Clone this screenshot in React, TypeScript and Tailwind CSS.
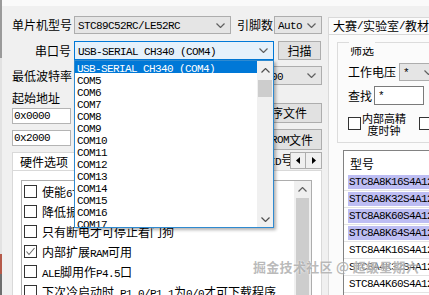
import React from 'react'

const mono = "font-['Liberation_Mono',monospace] text-[11px] tracking-[-0.6px]"

function M({ children }: { children: React.ReactNode }) {
  return <span className={mono}>{children}</span>
}

function Chevron({ up = false, color = '#606060' }: { up?: boolean; color?: string }) {
  return (
    <svg width="9" height="5" viewBox="0 0 9 5" className="shrink-0">
      <polyline
        points={up ? '0.5,4.5 4.5,0.5 8.5,4.5' : '0.5,0.5 4.5,4.5 8.5,0.5'}
        fill="none"
        stroke={color}
        strokeWidth="1.2"
      />
    </svg>
  )
}

function Combo({ cls, focused, children }: { cls: string; focused?: boolean; children?: React.ReactNode }) {
  return (
    <div
      className={`${cls} h-full shrink-0 flex items-center border pl-[3px] pr-[5px] ${
        focused ? 'border-[#0078d7] bg-[#e5f1fb]' : 'border-[#adadad] bg-[#e5e5e5]'
      }`}
    >
      <div className="flex-1 min-w-0 overflow-hidden whitespace-nowrap leading-[14px]">{children}</div>
      <Chevron />
    </div>
  )
}

function Btn({ cls, children }: { cls: string; children: React.ReactNode }) {
  return (
    <div
      className={`${cls} shrink-0 flex items-center justify-center border border-[#adadad] bg-[#e1e1e1] whitespace-nowrap overflow-hidden`}
    >
      {children}
    </div>
  )
}

function Field({ cls, children }: { cls: string; children: React.ReactNode }) {
  return (
    <div className={`${cls} h-[16px] w-[59px] flex items-center border border-[#b4b4b4] bg-white pl-[1px] overflow-hidden whitespace-nowrap`}>
      {children}
    </div>
  )
}

function Box({ checked }: { checked?: boolean }) {
  return (
    <div className="w-[13px] h-[13px] shrink-0 border border-[#333333] bg-white">
      {checked && (
        <svg width="11" height="11" viewBox="0 0 11 11">
          <polyline points="1.5,5.5 4,8.5 9.5,2" fill="none" stroke="#6a6a6a" strokeWidth="1.1" />
        </svg>
      )}
    </div>
  )
}

function Tri({ left }: { left?: boolean }) {
  return (
    <svg width="4" height="7" viewBox="0 0 4 7">
      <polygon points={left ? '4,0 0,3.5 4,7' : '0,0 4,3.5 0,7'} fill="#000" />
    </svg>
  )
}

// ──── 数据 ─────────────────────────────────────────
const ports = ['COM5', 'COM6', 'COM7', 'COM8', 'COM9', 'COM10', 'COM11', 'COM12', 'COM13', 'COM14', 'COM15', 'COM16', 'COM17']

const options: { checked?: boolean; text: React.ReactNode }[] = [
  { text: <>使能<M>6T(</M>双倍速<M>)</M></> },
  { text: <>降低振荡器放大增益</> },
  { text: <>只有断电才可停止看门狗</> },
  { checked: true, text: <>内部扩展<M>RAM</M>可用</> },
  { text: <><M>ALE</M>脚用作<M>P4.5</M>口</> },
  { text: <>下次冷启动时<M>,P1.0/P1.1</M>为<M>0/0</M>才可下载程序</> },
  { text: <>上电复位使用较长延时</> },
]

const models = [
  { name: 'STC8A8K16S4A12', hi: true },
  { name: 'STC8A8K32S4A12', hi: true },
  { name: 'STC8A8K60S4A12', hi: true },
  { name: 'STC8A8K64S4A12', hi: true },
  { name: 'STC8A4K16S4A12' },
  { name: 'STC8A4K32S4A12' },
  { name: 'STC8A4K60S4A12' },
  { name: 'STC8A4K64S4A12' },
]

export default function App() {
  return (
    <div className="relative w-[429px] h-[295px] overflow-hidden bg-[#f0f0f0] flex font-['Noto_Sans_CJK_SC',sans-serif] text-[12px] leading-[14px] text-black">
      {/* 背后窗口的边 */}
      <div className="w-[2px] shrink-0 flex flex-col">
        <div className="h-[58px] bg-[#9a9a9a]" />
        <div className="h-[196px] bg-[#e2e2e2]" />
        <div className="h-[20px] bg-[#b55a4a]" />
        <div className="flex-1 bg-[#6e6e6e]" />
      </div>

      <div className="w-[427px] shrink-0 flex flex-col overflow-hidden">
        <div className="h-[6px] bg-[#fafafa] shrink-0" />

        <div className="flex flex-1">
          {/* ──── 左侧 ──── */}
          <div className="w-[326px] shrink-0 pl-[10px] pr-[6px] pt-[10px] flex flex-col">
            <div className="flex items-center h-[18px]">
              <div className="w-[62px] shrink-0">单片机型号</div>
              <Combo cls="w-[157px]"><M>STC89C52RC/LE52RC</M></Combo>
              <div className="ml-[6px] w-[36px] shrink-0">引脚数</div>
              <Combo cls="ml-[1px] w-[48px]"><M>Auto</M></Combo>
            </div>

            <div className="flex items-center h-[19px] mt-[7px]">
              <div className="w-[62px] shrink-0 text-right pr-[3px]">串口号</div>
              <Combo cls="w-[200px]" focused><M>USB-SERIAL CH340 (COM4)</M></Combo>
              <Btn cls="ml-[4px] w-[43px] h-full">扫描</Btn>
            </div>

            <div className="flex items-center h-[19px] mt-[6px]">
              <div className="w-[62px] shrink-0">最低波特率</div>
              <Combo cls="w-[88px]"><M>2400</M></Combo>
              <div className="ml-[8px] w-[60px] shrink-0">最高波特率</div>
              <Combo cls="ml-[13px] w-[79px]"><M>115200</M></Combo>
            </div>

            <div className="flex">
              <div className="flex flex-col">
                <div className="mt-[6px] h-[14px]">起始地址</div>
                <Field cls="mt-[3px]"><M>0x0000</M></Field>
                <Field cls="mt-[6px]"><M>0x2000</M></Field>
              </div>
              <div className="ml-auto w-[102px] flex flex-col">
                <Btn cls="mt-[18px] h-[20px]">打开程序文件</Btn>
                <Btn cls="mt-[6px] h-[21px]">打开<M>EEPROM</M>文件</Btn>
              </div>
            </div>

            {/* 选项卡 */}
            <div className="flex h-[18px] mt-[2px]">
              <div className="w-[64px] shrink-0 bg-white border border-b-0 border-[#d9d9d9] pl-[7px] flex items-center">硬件选项</div>
              <div className="flex-1 min-w-0 overflow-hidden flex justify-end items-center">
                <span className="whitespace-nowrap mr-[-3px]">程序加密后传输 芯片<M>I</M><M>D</M>号</span>
              </div>
              <div className="flex items-start shrink-0">
                <div className="w-[16px] h-[17px] border border-[#adadad] bg-[#f0f0f0] flex items-center justify-center"><Tri left /></div>
                <div className="w-[16px] h-[17px] border border-l-0 border-[#adadad] bg-[#f0f0f0] flex items-center justify-center"><Tri /></div>
              </div>
            </div>

            <div className="h-[140px] shrink-0 border border-[#d9d9d9] bg-white pt-[9px] pl-[8px] pr-[9px] flex flex-col">
              <div className="h-[130px] shrink-0 border border-[#adadad] bg-white flex">
                <div className="flex-1 min-w-0 pt-[4px] pl-[2px] flex flex-col overflow-hidden">
                  {options.map((o, i) => (
                    <div key={i} className="h-[20px] shrink-0 flex items-start">
                      <Box checked={o.checked} />
                      <div className="ml-[5px] leading-[13px] whitespace-nowrap">{o.text}</div>
                    </div>
                  ))}
                </div>
                <div className="w-[17px] shrink-0 bg-[#f0f0f0] flex flex-col">
                  <div className="h-[17px] flex items-center justify-center"><Chevron up /></div>
                  <div className="mx-[2px] flex-1 bg-[#cdcdcd]" />
                </div>
              </div>
            </div>
          </div>

          {/* ──── 右侧 ──── */}
          <div className="w-[110px] shrink-0 pt-[11px] flex flex-col">
            <div className="h-[17px] shrink-0 border border-b-0 border-[#d9d9d9] bg-[#fbfbfb] pl-[4px] whitespace-nowrap overflow-hidden flex items-center">
              大赛<M>/</M>实验室<M>/</M>教材
            </div>
            <div className="flex-1 border-l border-t border-[#d9d9d9] bg-[#fbfbfb] pl-[8px] flex flex-col">
              {/* 筛选 */}
              <div className="mt-[7px] h-[101px] shrink-0 border-l border-b border-[#dcdcdc] flex flex-col">
                <div className="flex h-[14px] shrink-0">
                  <div className="w-[11px] border-t border-[#dcdcdc]" />
                  <div className="px-[1px] h-[14px] flex items-end">
                    <div className="h-[9px] overflow-hidden">
                      <div className="leading-[13px] mt-[-4px] whitespace-nowrap">筛选</div>
                    </div>
                  </div>
                  <div className="flex-1 border-t border-[#dcdcdc]" />
                </div>
                <div className="mt-[7px] h-[18px] pl-[10px] flex items-center">
                  <div className="w-[51px] shrink-0">工作电压</div>
                  <Combo cls="w-[40px]"><M>*</M></Combo>
                </div>
                <div className="mt-[5px] h-[19px] pl-[10px] flex items-center">
                  <div className="w-[26px] shrink-0">查找</div>
                  <div className="w-[50px] h-full shrink-0 border border-[#7a7a7a] bg-white pl-[3px] flex items-center"><M>*</M></div>
                </div>
                <div className="mt-[7px] h-[26px] pl-[10px] flex items-start">
                  <div className="mt-[5px]"><Box /></div>
                  <div className="ml-[1px] w-[44px] shrink-0 text-[11px] leading-[12px] text-center">内部高精<br />度时钟</div>
                  <div className="ml-[13px] mt-[5px]"><Box /></div>
                </div>
              </div>

              {/* 型号列表 */}
              <div className="mt-[7px] ml-[6px] w-[120px] flex-1 border border-[#828282] bg-white flex flex-col">
                <div className="h-[23px] shrink-0 pl-[6px] pt-[3px] flex items-center">型号</div>
                {models.map((m) => (
                  <div key={m.name} className="h-[17px] shrink-0 border-b border-[#e3e3e3] pl-[4px] pt-[1px]">
                    <div className={`h-[14px] pl-[1px] flex items-center whitespace-nowrap ${m.hi ? 'bg-[#bdbdf3]' : ''}`}>
                      <M>{m.name}</M>
                    </div>
                  </div>
                ))}
              </div>
            </div>
          </div>
        </div>
      </div>

      {/* 下拉列表 */}
      <div className="absolute left-[74px] top-[60px] w-[200px] h-[168px] border border-[#2f8ad0] bg-white flex shadow-[2px_2px_3px_rgba(0,0,0,0.3)]">
        <div className="flex-1 min-w-0 flex flex-col overflow-hidden">
          <div className="h-[12px] shrink-0 leading-[12px] pl-[2px] bg-[#0078d7] text-white whitespace-nowrap">
            <M>USB-SERIAL CH340 (COM4)</M>
          </div>
          {ports.map((p) => (
            <div key={p} className="h-[12px] shrink-0 leading-[12px] pl-[2px] whitespace-nowrap">
              <M>{p}</M>
            </div>
          ))}
        </div>
        <div className="w-[16px] shrink-0 bg-[#f0f0f0] flex flex-col">
          <div className="h-[18px] flex items-center justify-center"><Chevron up color="#505050" /></div>
          <div className="mx-[1px] mt-[1px] h-[17px] bg-[#cdcdcd]" />
          <div className="flex-1" />
          <div className="h-[16px] flex items-center justify-center"><Chevron color="#505050" /></div>
        </div>
      </div>

      {/* 水印 */}
      <div className="absolute left-[253px] top-[259px] text-[13px] leading-[16px] tracking-[0.3px] font-bold text-[rgba(140,140,140,0.6)] whitespace-nowrap [text-shadow:0_0_2px_#fff]">
        掘金技术社区 @ 超级星期六
      </div>
    </div>
  )
}
